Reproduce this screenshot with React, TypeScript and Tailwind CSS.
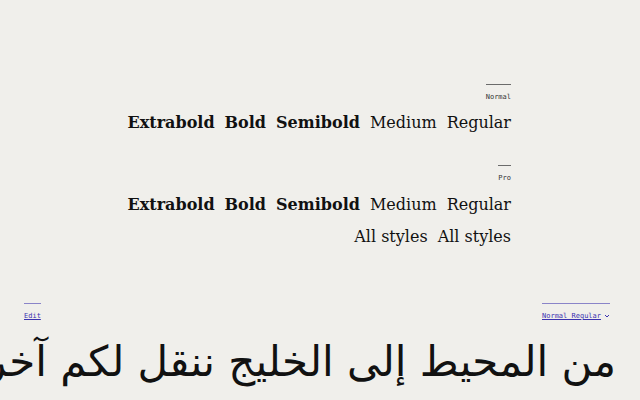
import React from "react";

const serif = { fontFamily: '"DejaVu Serif", "Liberation Serif", serif' };
const mono = { fontFamily: '"DejaVu Sans Mono", "Liberation Mono", monospace' };

function Label({ text }: { text: string }) {
  return (
    <div
      className="border-t border-[#6b6b6b] pt-[8px] text-[7px] leading-[8px] text-[#333]"
      style={mono}
    >
      {text}
    </div>
  );
}

function Row({ items }: { items: { t: string; w: string }[] }) {
  return (
    <div className="flex gap-[10px] text-[16px] leading-[24px] text-[#111]" style={serif}>
      {items.map((it, i) => (
        <span key={i} className={it.w}>
          {it.t}
        </span>
      ))}
    </div>
  );
}

const weights = [
  { t: "Extrabold", w: "font-extrabold" },
  { t: "Bold", w: "font-bold" },
  { t: "Semibold", w: "font-semibold" },
  { t: "Medium", w: "font-medium" },
  { t: "Regular", w: "font-normal" },
];

export default function App() {
  return (
    <div className="relative h-[400px] w-[640px] overflow-hidden bg-[#f0efeb]">
      <div className="flex flex-col items-end pr-[129px] pt-[84px]">
        <Label text="Normal" />
        <div className="mt-[10px]">
          <Row items={weights} />
        </div>
        <div className="mt-[30px]">
          <Label text="Pro" />
        </div>
        <div className="mt-[11px]">
          <Row items={weights} />
        </div>
        <div className="mt-[8px]">
          <Row
            items={[
              { t: "All styles", w: "font-normal" },
              { t: "All styles", w: "font-normal" },
            ]}
          />
        </div>
      </div>
      <div className="mt-[54px] flex justify-between pl-[24px] pr-[30px]">
        <div
          className="border-t border-[#8a84c8] pt-[8px] text-[7px] leading-[8px] text-[#3b32b0] underline"
          style={mono}
        >
          Edit
        </div>
        <div
          className="flex items-center gap-[3px] whitespace-nowrap border-t border-[#8a84c8] pt-[8px] text-[7px] leading-[8px] text-[#3b32b0]"
          style={mono}
        >
          <span className="underline">Normal Regular</span>
          <svg width="6" height="6" viewBox="0 0 6 6" fill="none">
            <path d="M1 2l2 2 2-2" stroke="#3b32b0" strokeWidth="1" />
          </svg>
        </div>
      </div>
      <div
        dir="rtl"
        className="mt-[14px] whitespace-nowrap pr-[24px] text-[42px] leading-[56px] text-[#111]"
        style={{ fontFamily: '"DejaVu Sans", "Noto Sans", sans-serif' }}
      >
        من المحيط إلى الخليج ننقل لكم آخر الأخبار
      </div>
    </div>
  );
}
